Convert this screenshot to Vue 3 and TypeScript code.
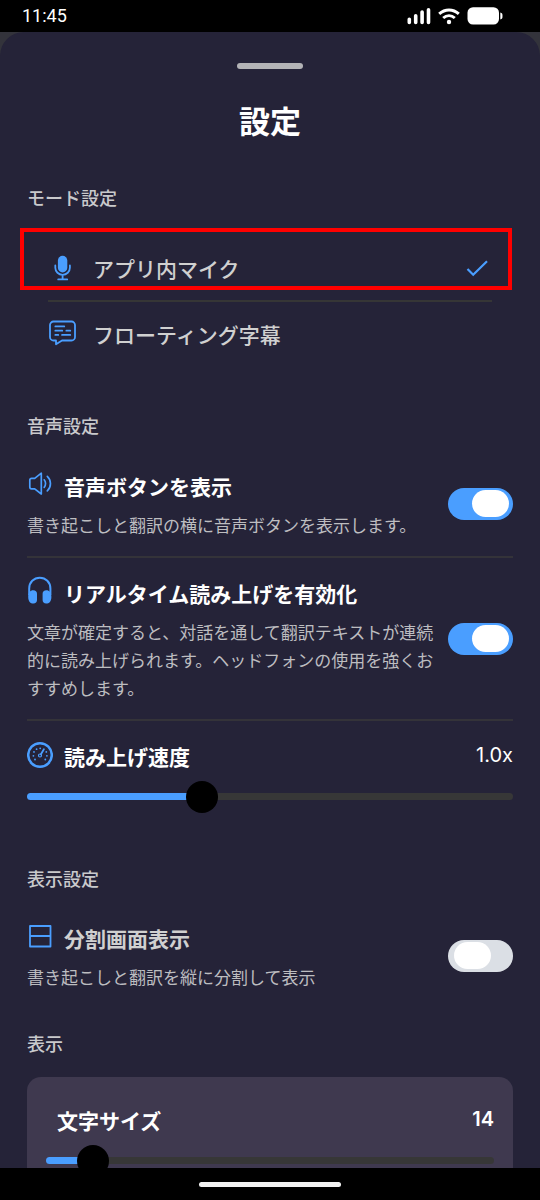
<script setup lang="ts">
import { computed, ref } from 'vue'

type Mode = 'mic' | 'caption'

const mode = ref<Mode>('mic')
const showVoiceButton = ref(true)
const realtimeReading = ref(true)
const splitScreen = ref(false)

const speed = ref(1)
const speedRange = { min: 0.3, max: 2.3 }
const fontSize = ref(14)
const fontRange = { min: 12, max: 39 }

const ratio = (value: number, range: { min: number; max: number }) =>
  (value - range.min) / (range.max - range.min)

const speedStyle = computed(() => ({ '--ratio': ratio(speed.value, speedRange) }))
const fontStyle = computed(() => ({ '--ratio': ratio(fontSize.value, fontRange) }))
</script>

<template>
  <div class="screen">
    <header class="status">
      <span class="clock">11:45</span>
      <svg class="status-icons" width="98" height="20" viewBox="0 0 98 20" aria-hidden="true">
        <g stroke="#fff" stroke-width="3.6" stroke-linecap="round">
          <path d="M3.3 13.2v3.2M9.7 9.8v6.6M16.1 6v10.4M22.5 3.8v12.6" />
        </g>
        <g fill="none" stroke="#fff" stroke-width="3">
          <path d="M33.2 7.8c5.7-5.2 13.9-5.2 19.6 0" />
          <path d="M37.2 12c3.4-3 8.2-3 11.6 0" />
        </g>
        <circle cx="43" cy="16" r="2.2" fill="#fff" />
        <rect x="61.5" y="1.2" width="31.5" height="17.4" rx="5.5" fill="#fff" />
        <path d="M94.3 6.5c1.8.3 2.2 1.4 2.2 3.5s-.4 3.2-2.2 3.5z" fill="#fff" />
      </svg>
    </header>

    <div class="backdrop">
      <main class="sheet">
        <div class="handle"></div>
        <h1>設定</h1>

        <section class="modes">
          <h2 id="mode-heading">モード設定</h2>
          <div class="mode-list" role="radiogroup" aria-labelledby="mode-heading">
            <label class="mode highlighted">
              <input v-model="mode" type="radio" name="mode" value="mic" />
              <svg width="28" height="28" viewBox="0 0 28 28" aria-hidden="true">
                <rect x="9.9" y="1.8" width="9.4" height="16.6" rx="4.7" fill="#4a9eff" />
                <g fill="none" stroke="#4a9eff" stroke-width="1.8" stroke-linecap="round">
                  <path d="M7.3 11.5v2.3a7.3 7 0 0 0 14.6 0v-2.3M14.6 20.8v4.5M10.2 25.4h9" />
                </g>
              </svg>
              <span>アプリ内マイク</span>
              <svg v-if="mode === 'mic'" class="check" width="28" height="28" viewBox="0 0 28 28" aria-hidden="true">
                <path d="M3.5 15l5.700 5.700L23 7.200" fill="none" stroke="#4a9eff" stroke-width="2.200" />
              </svg>
            </label>
            <label class="mode">
              <input v-model="mode" type="radio" name="mode" value="caption" />
              <svg width="28" height="28" viewBox="0 0 28 28" aria-hidden="true">
                <g fill="none" stroke="#4a9eff" stroke-width="1.800" stroke-linejoin="round" stroke-linecap="round">
                  <path d="M5.500 1.500h18a3.500 3.500 0 0 1 3.500 3.500v12a3.500 3.500 0 0 1-3.500 3.500h-9.500l-6 3.800V20.500H5.500A3.500 3.500 0 0 1 2 17V5a3.500 3.500 0 0 1 3.500-3.500z" />
                  <path d="M7.300 6.400h9M7.300 10.700h7M18.300 10.700h4M7.300 14.900h3M14 14.900h8.300" stroke-width="1.700" />
                </g>
              </svg>
              <span>フローティング字幕</span>
              <svg v-if="mode === 'caption'" class="check" width="28" height="28" viewBox="0 0 28 28" aria-hidden="true">
                <path d="M3.500 15l5.700 5.700L23 7.200" fill="none" stroke="#4a9eff" stroke-width="2.200" />
              </svg>
            </label>
          </div>
        </section>

        <section class="voice">
          <h2>音声設定</h2>
          <div class="setting">
            <label class="text" for="voice-button">
              <span class="name">
                <svg width="26" height="32" viewBox="0 0 26 32" aria-hidden="true">
                  <g fill="none" stroke="#4a9eff" stroke-width="1.700" stroke-linejoin="round" stroke-linecap="round">
                    <path d="M14.300 5.200v20.800l-6.600-5.200H4.500a1.700 1.700 0 0 1-1.700-1.700v-7a1.700 1.700 0 0 1 1.700-1.700h3.200z" />
                    <path d="M17.200 11.800c1.800 2 1.800 5.600 0 7.600M20.300 8.300c4.200 3.800 4.200 10.800 0 14.600" />
                  </g>
                </svg>
                音声ボタンを表示
              </span>
              <span class="description">書き起こしと翻訳の横に音声ボタンを表示します。</span>
            </label>
            <input id="voice-button" v-model="showVoiceButton" class="toggle" type="checkbox" role="switch" />
          </div>
          <div class="setting">
            <label class="text" for="realtime-reading">
              <span class="name">
                <svg width="26" height="32" viewBox="0 0 26 32" aria-hidden="true">
                  <path d="M2.200 20v-6.500c0-6.200 4.600-10.800 10.600-10.800s10.600 4.600 10.600 10.800V20" fill="none" stroke="#4a9eff" stroke-width="2" />
                  <path d="M6.200 15.200c2.400 0 3.800 1.300 3.800 3.500v6.400c0 2.200-1.400 3.500-3.500 3.500-3.200 0-5.300-2.600-5.300-6.700 0-4 2-6.700 5-6.700zM19.400 15.200c-2.400 0-3.800 1.300-3.800 3.500v6.400c0 2.200 1.400 3.500 3.500 3.500 3.200 0 5.300-2.600 5.300-6.700 0-4-2-6.700-5-6.700z" fill="#4a9eff" />
                </svg>
                リアルタイム読み上げを有効化
              </span>
              <span class="description">文章が確定すると、対話を通して翻訳テキストが連続的に読み上げられます。ヘッドフォンの使用を強くおすすめします。</span>
            </label>
            <input id="realtime-reading" v-model="realtimeReading" class="toggle" type="checkbox" role="switch" />
          </div>
          <div class="slider-setting">
            <div class="slider-head">
              <label class="name" for="speed">
                <svg width="26" height="34" viewBox="0 0 26 34" aria-hidden="true">
                  <circle cx="13" cy="17" r="11.800" fill="none" stroke="#4a9eff" stroke-width="2.500" />
                  <g fill="#4a9eff">
                    <circle cx="8" cy="21.500" r=".9" />
                    <circle cx="6.400" cy="17.800" r=".9" />
                    <circle cx="7" cy="13.900" r=".9" />
                    <circle cx="9.600" cy="11.200" r=".9" />
                    <circle cx="13.200" cy="10.300" r=".9" />
                    <circle cx="19.300" cy="13.900" r=".9" />
                    <circle cx="19.900" cy="17.800" r=".9" />
                    <circle cx="18.300" cy="21.500" r=".9" />
                  </g>
                  <path d="M13.900 16.300l3-5" fill="none" stroke="#4a9eff" stroke-width="1.800" stroke-linecap="round" />
                  <circle cx="13" cy="17.500" r="1.500" fill="none" stroke="#4a9eff" stroke-width="1.200" />
                </svg>
                読み上げ速度
              </label>
              <output for="speed">{{ speed.toFixed(1) }}x</output>
            </div>
            <input id="speed" v-model.number="speed" class="slider" type="range" :min="speedRange.min" :max="speedRange.max" step="0.1" :style="speedStyle" />
          </div>
        </section>

        <section class="display">
          <h2>表示設定</h2>
          <div class="setting muted">
            <label class="text" for="split-screen">
              <span class="name">
                <svg width="26" height="32" viewBox="0 0 26 32" aria-hidden="true">
                  <path d="M3 6h20.500v20.500H3zM3 16h20.500" fill="none" stroke="#4a9eff" stroke-width="1.800" stroke-linejoin="round" />
                </svg>
                分割画面表示
              </span>
              <span class="description">書き起こしと翻訳を縦に分割して表示</span>
            </label>
            <input id="split-screen" v-model="splitScreen" class="toggle" type="checkbox" role="switch" />
          </div>
        </section>

        <section class="appearance">
          <h2>表示</h2>
          <div class="card">
            <div class="slider-head">
              <label class="name" for="font-size">文字サイズ</label>
              <output class="strong" for="font-size">{{ fontSize }}</output>
            </div>
            <input id="font-size" v-model.number="fontSize" class="slider" type="range" :min="fontRange.min" :max="fontRange.max" :style="fontStyle" />
          </div>
        </section>
      </main>
    </div>

    <footer class="gesture-bar"><span></span></footer>
  </div>
</template>

<style>
body {
  margin: 0;
  background: #000;
}
</style>

<style scoped>
* {
  box-sizing: border-box;
}

.screen {
  display: flex;
  flex-direction: column;
  height: 100vh;
  overflow: hidden;
  color: #fff;
  font-family: "Noto Sans CJK JP", sans-serif;
}

.status {
  flex: none;
  display: flex;
  align-items: center;
  justify-content: space-between;
  height: 32px;
  padding: 0 36px 0 22px;
}

.clock {
  font: 18px/32px Roboto, sans-serif;
}

.status-icons {
  display: block;
}

.backdrop {
  flex: 1;
  min-height: 0;
  background: #33333b;
  overflow: hidden;
}

.sheet {
  height: 100%;
  padding: 31px 27px 0;
  border-radius: 24px 24px 0 0;
  background: #252338;
  overflow: hidden;
}

.handle {
  width: 66px;
  height: 6px;
  margin: 0 auto 29px;
  border-radius: 3px;
  background: #b3b3b6;
}

h1 {
  margin: 0 0 41px;
  font-size: 31px;
  font-weight: 700;
  line-height: 44px;
  text-align: center;
}

h2 {
  margin: 0;
  color: #c9c9cc;
  font-size: 18px;
  font-weight: 500;
  line-height: 28px;
}

.mode-list {
  margin: 25px 21px 45px;
}

.mode {
  position: relative;
  display: flex;
  align-items: center;
  height: 64px;
  color: #d0d0d0;
  font-size: 21px;
  font-weight: 500;
  cursor: pointer;
}

.mode + .mode {
  height: 66px;
  border-top: 2px solid #363636;
}

.mode input {
  position: absolute;
  opacity: 0;
}

.mode span {
  flex: 1;
  margin-left: 17px;
}

.highlighted::after {
  content: "";
  position: absolute;
  inset: -8px -20px 10px -28px;
  border: 4px solid #f00;
}

.setting {
  display: flex;
  align-items: center;
  gap: 14px;
  padding-bottom: 17px;
  margin-bottom: 17px;
  border-bottom: 2px solid #343339;
}

.voice .setting:first-of-type {
  margin-top: 29px;
}

.text {
  flex: 1;
  display: flex;
  flex-direction: column;
  gap: 7px;
}

.name {
  display: flex;
  align-items: flex-start;
  gap: 11px;
  font-size: 21px;
  font-weight: 700;
  line-height: 36px;
}

.description {
  color: #bdbdc0;
  font-size: 17px;
  line-height: 28px;
}

.muted {
  margin: 28px 0 38px;
  padding: 0;
  border: 0;
}

.muted .name {
  color: #d0d0d0;
}

.toggle {
  appearance: none;
  flex: none;
  display: flex;
  align-items: center;
  width: 65px;
  height: 32px;
  margin: 0;
  padding: 0 4px 0 6px;
  border-radius: 16px;
  background: #dbdfe5;
  cursor: pointer;
}

.toggle::before {
  content: "";
  width: 37px;
  height: 27px;
  border-radius: 14px;
  background: #fff;
}

.toggle:checked {
  justify-content: flex-end;
  background: #4a9eff;
}

.slider-setting {
  margin-bottom: 52px;
}

.slider-head {
  display: flex;
  justify-content: space-between;
  margin-bottom: 6px;
}

output {
  font: 20px/34px Inter, sans-serif;
}

.strong {
  font-weight: 600;
}

.slider {
  appearance: none;
  display: block;
  width: 100%;
  height: 32px;
  margin: 0;
  background: none;
  cursor: pointer;
}

.slider::-webkit-slider-runnable-track {
  height: 7px;
  border-radius: 4px;
  background: linear-gradient(#4a9eff, #4a9eff) 0 0 / calc(16px + (100% - 32px) * var(--ratio)) 100% no-repeat #373737;
}

.slider::-webkit-slider-thumb {
  appearance: none;
  width: 32px;
  height: 32px;
  margin-top: -12px;
  border-radius: 50%;
  background: #000;
}

.card {
  margin-top: 20px;
  padding: 25px 19px;
  border-radius: 14px;
  background: #3f394f;
}

.card .name {
  padding-left: 11px;
}

.gesture-bar {
  flex: none;
  display: flex;
  align-items: center;
  justify-content: center;
  height: 32px;
}

.gesture-bar span {
  width: 142px;
  height: 5px;
  border-radius: 3px;
  background: #f2f2f2;
}
</style>
